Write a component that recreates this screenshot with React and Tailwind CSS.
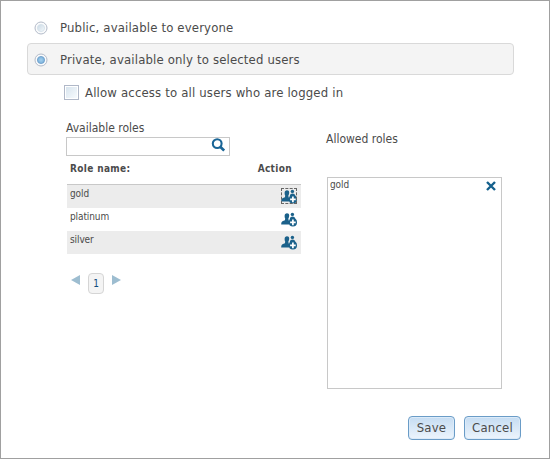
import React from "react";

function Radio({ checked }) {
  return (
    <svg width="14" height="14" viewBox="0 0 14 14" className="shrink-0">
      <defs>
        <linearGradient id="radioOff" x1="0" y1="0" x2="1" y2="1">
          <stop offset="0" stopColor="#c9d8e4" />
          <stop offset="1" stopColor="#f4f9fc" />
        </linearGradient>
        <radialGradient id="radioOn">
          <stop offset="0" stopColor="#a5d0ee" />
          <stop offset="1" stopColor="#78b0da" />
        </radialGradient>
      </defs>
      <circle cx="7" cy="7" r="6" fill="#fafbfc" stroke="#b3bbc9" />
      <circle
        cx="7"
        cy="7"
        r="3.6"
        fill={checked ? "url(#radioOn)" : "url(#radioOff)"}
        stroke={checked ? "#6c9cc8" : "#d3dfe9"}
        strokeWidth="0.8"
      />
    </svg>
  );
}

function SearchIcon() {
  return (
    <svg width="14" height="14" viewBox="0 0 14 14" fill="none" stroke="#1a6596">
      <circle cx="6.2" cy="5.6" r="4.4" strokeWidth="2.1" />
      <path d="M9.2 8.8 L13.2 12.6" strokeWidth="2.8" />
    </svg>
  );
}

function AddUsersIcon() {
  return (
    <svg width="16" height="16" viewBox="0 0 16 16" fill="#1b618a">
      <path d="M3.6 4.9 C3.6 3 4.6 2.2 6 2.2 C7.4 2.2 8.2 2.9 8.2 4.4 C8.2 6 7.6 6.9 7.3 7.6 L7.6 9 L8 10 V13.6 H0.2 C0.2 11.6 0.6 10.6 2 10 L3.9 9.2 L4.2 7.8 C3.8 7 3.6 5.8 3.6 4.9Z" />
      <circle cx="11.4" cy="3.4" r="1.7" />
      <path d="M8.8 8.4 C8.8 6.4 10 5.6 11.5 5.6 C13.2 5.6 14.2 6.5 14.4 8.4 L12 10 L9 9.5Z" />
      <circle cx="11.9" cy="11.4" r="4.1" />
      <path d="M11.9 8.6 V14.2 M9.1 11.4 H14.7" stroke="#fff" strokeWidth="1.7" />
    </svg>
  );
}

const roles = [
  { name: "gold", focused: true },
  { name: "platinum" },
  { name: "silver" },
];

function AvailableRoles() {
  return (
    <section className="w-[235px]">
      <h2 className="h-4 text-[12px] leading-4">Available roles</h2>
      <div className="mt-px flex h-[19px] w-[164px] items-start justify-end border border-[#c8c8c8] pr-1">
        <SearchIcon />
      </div>
      <div className="ml-px">
        <div className="flex h-[29px] justify-between border-b border-[#c8c8c8] pt-[6px] pr-[9px] pl-[3px] text-[10px] leading-[14px] font-bold tracking-[0.35px]">
          <span>Role name:</span>
          <span>Action</span>
        </div>
        {roles.map((r) => (
          <div key={r.name} className="flex h-[23px] justify-between pr-1 pl-[3px] odd:bg-white even:bg-[#ececec]">
            <span className="pt-[2px] text-[10px] leading-[14px] tracking-[-0.1px]">{r.name}</span>
            <span
              className={
                r.focused
                  ? "mt-[3px] flex size-4 outline-1 -outline-offset-1 outline-dashed outline-[#666]"
                  : "mt-[3px] flex size-4"
              }
            >
              <AddUsersIcon />
            </span>
          </div>
        ))}
      </div>
      <div className="mt-[19px] flex pl-[5px]">
        <svg width="9" height="10" className="mt-[2px]">
          <path d="M9 0V10L0 5Z" fill="#9dbdd0" />
        </svg>
        <span className="ml-2 flex h-[21px] w-4 items-center justify-center rounded-[4px] border border-[#d5d5d5] bg-[#f4f4f4] text-[10px] text-[#0f4d7c]">
          1
        </span>
        <svg width="9" height="10" className="ml-2 mt-[2px]">
          <path d="M0 0V10L9 5Z" fill="#9dbdd0" />
        </svg>
      </div>
    </section>
  );
}

function AllowedRoles() {
  return (
    <section className="ml-[25px] pt-[11px]">
      <h2 className="h-4 text-[12px] leading-4">Allowed roles</h2>
      <div className="mt-[30px] ml-px flex h-[212px] w-[175px] items-start justify-between border border-[#c8c8c8] pr-[5px] pl-[2px]">
        <span className="text-[10px] leading-[14px] tracking-[-0.1px]">gold</span>
        <svg width="10" height="10" className="mt-[3px]">
          <path d="M1 1L9 9M9 1L1 9" stroke="#14608c" strokeWidth="2.4" />
        </svg>
      </div>
    </section>
  );
}

function Button({ children, className }) {
  return (
    <button
      className={`h-6 rounded-[4px] border border-[#6a9cc7] bg-linear-to-b from-[#c5dcf2] to-[#edf5fd] text-[13px] leading-[22px] tracking-[0.2px] shadow-[inset_0_0_0_1px_#dcebf9] ${className}`}
    >
      {children}
    </button>
  );
}

export default function App() {
  return (
    <main className="h-[459px] w-[550px] border border-[#a0a0a0] bg-white font-['DejaVu_Sans_Condensed','DejaVu_Sans',sans-serif] [font-stretch:condensed] text-[#4b4b4b]">
      <div className="mt-[10px] flex h-8 items-center gap-3 pt-[2px] pl-[33px] text-[13px] tracking-[0.16px]">
        <Radio />
        <span>Public, available to everyone</span>
      </div>
      <div className="ml-[26px] flex h-8 w-[487px] items-center gap-3 rounded-[4px] border border-[#d9d9d9] bg-[#f4f4f4] pt-[2px] pl-[6px] text-[13px] tracking-[0.16px]">
        <Radio checked />
        <span>Private, available only to selected users</span>
      </div>
      <div className="mt-[10px] ml-[63px] flex h-[15px] items-center gap-[6px] text-[13px] tracking-[0.17px]">
        <span className="size-[15px] border border-[#b0b8c8] bg-linear-to-br from-[#d5e2ec] to-[#fafdff] shadow-[inset_0_0_0_1px_#fff]" />
        <span>Allow access to all users who are logged in</span>
      </div>
      <div className="mt-5 flex pl-[65px]">
        <AvailableRoles />
        <AllowedRoles />
      </div>
      <div className="mt-[27px] flex gap-[9px] pl-[407px]">
        <Button className="w-[47px]">Save</Button>
        <Button className="w-[57px]">Cancel</Button>
      </div>
    </main>
  );
}
